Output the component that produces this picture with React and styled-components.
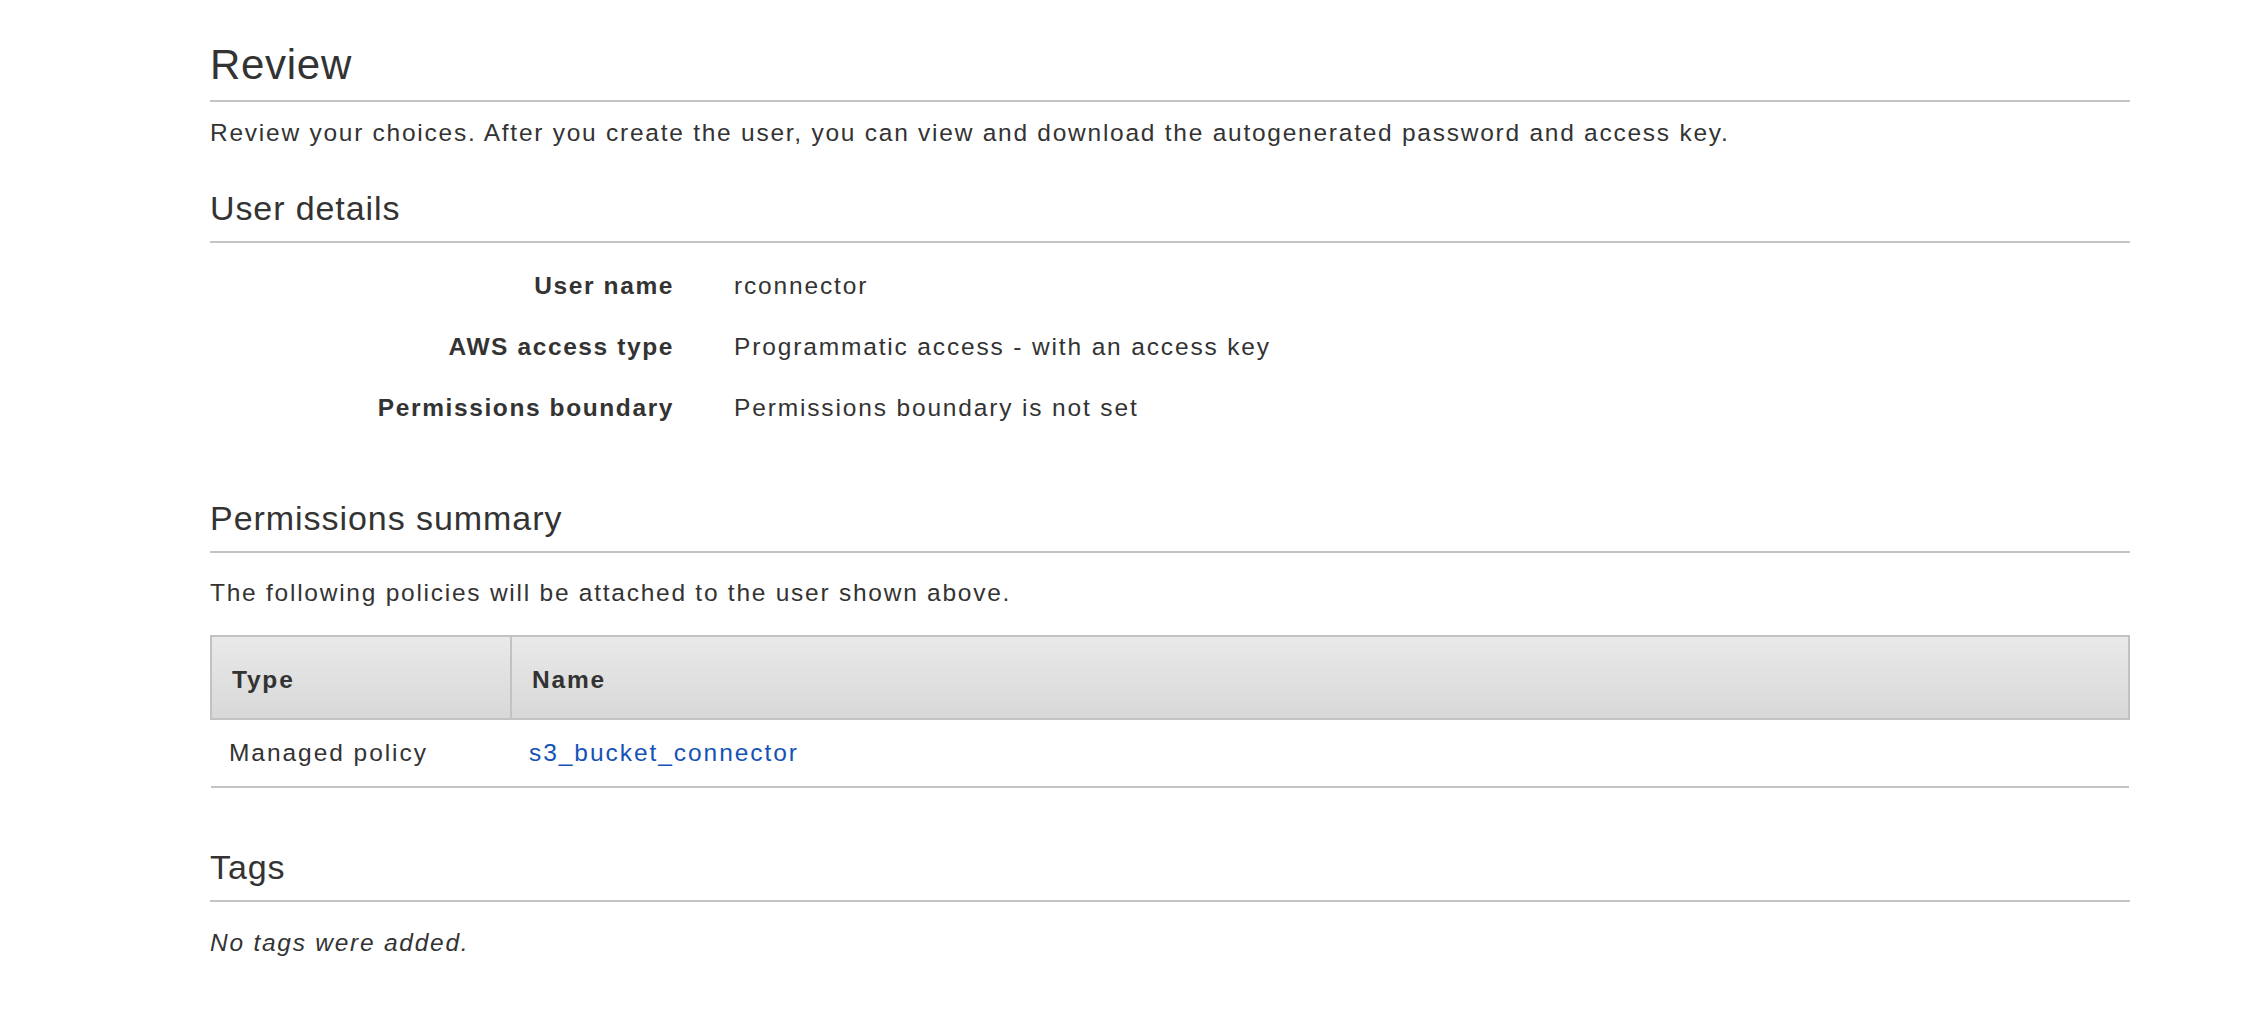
import React from "react";
import styled, { createGlobalStyle } from "styled-components";

const GlobalStyle = createGlobalStyle`
  html, body {
    margin: 0;
    padding: 0;
    background: #ffffff;
  }
  body {
    font-family: "Liberation Sans", Arial, Helvetica, sans-serif;
    color: #333333;
  }
`;

const Page = styled.main`
  width: 1920px;
  padding: 0 0 40px 210px;
`;

const Title = styled.h2`
  margin: ${(p) => p.$top}px 0 0;
  padding-bottom: ${(p) => p.$pad}px;
  font-size: ${(p) => p.$size}px;
  line-height: ${(p) => p.$lh}px;
  letter-spacing: ${(p) => p.$ls}px;
  font-weight: 400;
  color: #333333;
  border-bottom: 2px solid #c4c4c4;
`;

const Text = styled.p`
  margin: ${(p) => p.$top}px 0 0;
  font-size: 24.5px;
  line-height: 30px;
  letter-spacing: 1.75px;
  font-style: ${(p) => (p.$italic ? "italic" : "normal")};
  color: #333333;
`;

const DetailGrid = styled.dl`
  display: grid;
  grid-template-columns: 464px 1fr;
  column-gap: 60px;
  row-gap: 31px;
  margin: 28px 0 0;
  font-size: 24.5px;
  line-height: 30px;
`;

const Label = styled.dt`
  margin: 0;
  text-align: right;
  font-weight: 700;
  letter-spacing: 1.6px;
  color: #333333;
`;

const Value = styled.dd`
  margin: 0;
  letter-spacing: 1.85px;
  color: #333333;
`;

const Table = styled.table`
  width: 1920px;
  margin-top: 27px;
  border-collapse: collapse;
  font-size: 24.5px;
  line-height: 30px;
  letter-spacing: 1.95px;
`;

const HeadCell = styled.th`
  text-align: left;
  font-weight: 700;
  letter-spacing: 1.8px;
  color: #333333;
  padding: 28px 20px 23px;
  background: linear-gradient(to bottom, #e9e9e9 0%, #d8d8d8 100%);
  border: 2px solid #c2c2c2;
  width: ${(p) => (p.$w ? `${p.$w}px` : "auto")};
  box-sizing: border-box;
`;

const Cell = styled.td`
  padding: 18px 20px 18px 18px;
  border-bottom: 2px solid #c4c4c4;
  color: #333333;
`;

const Link = styled.a`
  color: #1552b6;
  text-decoration: none;
`;

const details = [
  ["User name", "rconnector"],
  ["AWS access type", "Programmatic access - with an access key"],
  ["Permissions boundary", "Permissions boundary is not set"],
];

export default function App() {
  return (
    <>
      <GlobalStyle />
      <Page>
        <Title $top={40} $pad={10} $size={42} $lh={50} $ls={0.7}>
          Review
        </Title>
        <Text $top={16}>
          Review your choices. After you create the user, you can view and download the autogenerated password and access key.
        </Text>

        <Title as="h3" $top={40} $pad={13} $size={34} $lh={40} $ls={0.9}>
          User details
        </Title>
        <DetailGrid>
          {details.map(([k, v]) => (
            <React.Fragment key={k}>
              <Label>{k}</Label>
              <Value>{v}</Value>
            </React.Fragment>
          ))}
        </DetailGrid>

        <Title as="h3" $top={75} $pad={13} $size={34} $lh={40} $ls={0.95}>
          Permissions summary
        </Title>
        <Text $top={25}>The following policies will be attached to the user shown above.</Text>
        <Table>
          <thead>
            <tr>
              <HeadCell $w={300}>Type</HeadCell>
              <HeadCell>Name</HeadCell>
            </tr>
          </thead>
          <tbody>
            <tr>
              <Cell>Managed policy</Cell>
              <Cell>
                <Link href="#">s3_bucket_connector</Link>
              </Cell>
            </tr>
          </tbody>
        </Table>

        <Title as="h3" $top={59} $pad={13} $size={34} $lh={40} $ls={0.9}>
          Tags
        </Title>
        <Text $top={26} $italic>
          No tags were added.
        </Text>
      </Page>
    </>
  );
}
